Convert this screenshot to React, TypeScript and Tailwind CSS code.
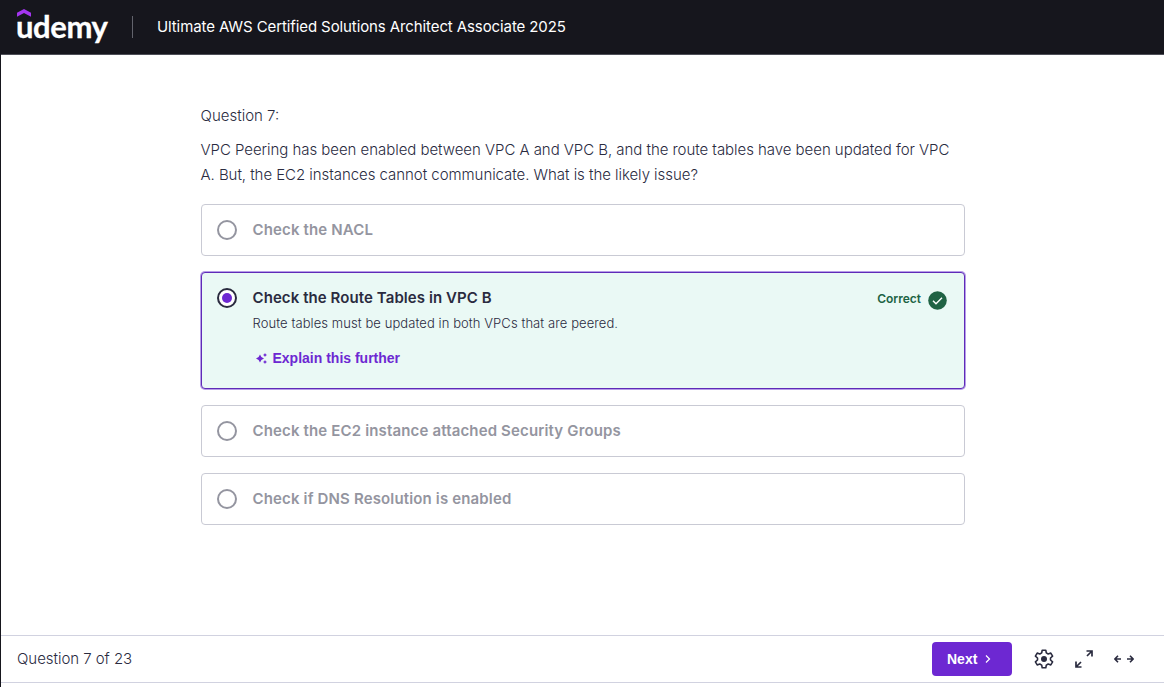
import React from "react";

function Radio({ checked = false }: { checked?: boolean }) {
  return (
    <span
      className={
        checked
          ? "flex size-5 shrink-0 items-center justify-center rounded-full border-2 border-[#2a2b3f] bg-white"
          : "flex size-5 shrink-0 items-center justify-center rounded-full border-2 border-[#9495a0] bg-white"
      }
    >
      {checked && <span className="size-2.5 rounded-full bg-[#6d28d2]" />}
    </span>
  );
}

function Option({ label }: { label: string }) {
  return (
    <div className="flex h-[52px] items-center gap-[15.5px] rounded border border-[#c9cad4] px-[15px]">
      <Radio />
      <span className="text-[15px] leading-6 font-semibold tracking-[0.15px] text-[#9495a0]">{label}</span>
    </div>
  );
}

export default function App() {
  return (
    <div className="flex h-[687px] w-[1164px] flex-col overflow-hidden border-l border-[#16161d] bg-white font-['Inter',sans-serif] text-[#2a2b3f]">
      <header className="flex h-[55px] shrink-0 items-center border-b border-[#4d4e57] bg-[#16161d] pl-[15px]">
        <div className="relative h-full w-[92px] font-['Lato',sans-serif] text-[31px] leading-[53px] font-bold tracking-[-0.4px] text-white [-webkit-text-stroke:0.3px_white]">
          udemy
          <svg className="absolute top-[9px] left-[1px]" width="14" height="8" viewBox="0 0 14 8" fill="#a435f0">
            <path d="M7 0 14 3.700v4L7 4 0 7.700v-4z" />
          </svg>
        </div>
        <span className="ml-6 h-[22px] w-px bg-[#62636c]" />
        <span className="ml-6 text-[15px] tracking-[-0.1px] text-white">Ultimate AWS Certified Solutions Architect Associate 2025</span>
      </header>

      <main className="flex flex-1 flex-col pt-[49px] pl-[200px]">
        <div className="flex w-[764px] flex-col">
          <div className="-ml-[0.5px] text-[15px] leading-6 font-light">Question 7:</div>
          <p className="mt-[9px] -ml-[0.5px] text-[15px] leading-[25px] font-light tracking-[-0.045px]">
            <span className="block whitespace-nowrap">VPC Peering has been enabled between VPC A and VPC B, and the route tables have been updated for VPC</span>
            <span className="block whitespace-nowrap">A. But, the EC2 instances cannot communicate. What is the likely issue?</span>
          </p>
          <div className="mt-[17px] flex flex-col gap-4">
            <Option label="Check the NACL" />
            <div className="flex h-[117px] rounded border border-[#5f2bb8] bg-[#eaf9f5] pl-[15px] shadow-[0_0_0_1px_#b79ee8]">
              <div className="pt-[15px]">
                <Radio checked />
              </div>
              <div className="ml-[15.5px] flex flex-1 flex-col pt-[13px]">
                <span className="text-[15px] leading-6 font-semibold tracking-[0.08px]">Check the Route Tables in VPC B</span>
                <span className="mt-[3px] text-[13px] leading-5 font-light tracking-[0.08px]">Route tables must be updated in both VPCs that are peered.</span>
                <button className="mt-[15px] flex items-center gap-[6px] pl-[3px] text-left font-['Liberation_Sans',sans-serif] text-[14px] leading-5 font-bold text-[#6d28d2]">
                  <svg width="11" height="11" viewBox="0 0 11 11" fill="currentColor">
                    <path d="M4 1.500 5.400 4.100 8 5.500 5.400 6.900 4 9.500 2.600 6.900 0 5.500 2.600 4.100zM9 0l.7 1.300 1.300.7-1.300.7L9 4l-.7-1.300L7 2l1.300-.7zM9 7l.7 1.300L11 9l-1.300.7L9 11l-.7-1.300L7 9l1.300-.7z" />
                  </svg>
                  Explain this further
                </button>
              </div>
              <div className="mt-4 mr-[17px] flex h-5 items-center gap-[7px] text-[12px] font-semibold text-[#206344]">
                <span>Correct</span>
                <svg className="mt-0.5" width="19" height="19" viewBox="0 0 19 19" fill="none">
                  <circle cx="9.5" cy="9.5" r="9.3" fill="#206344" />
                  <path d="m5 9.700 3 3 6-6" stroke="white" strokeWidth="1.4" />
                </svg>
              </div>
            </div>
            <Option label="Check the EC2 instance attached Security Groups" />
            <Option label="Check if DNS Resolution is enabled" />
          </div>
        </div>
      </main>

      <footer className="mb-1 flex h-12 shrink-0 items-center border-y border-[#d1d2e0] pl-4">
        <span className="text-[15px] font-light tracking-[-0.04px]">Question 7 of 23</span>
        <button className="ml-auto flex h-[34px] w-20 items-center rounded bg-[#6d28d2] pl-[15px] font-['Liberation_Sans',sans-serif] text-[14px] font-bold text-white">
          Next
          <svg className="ml-[8px]" width="6" height="8" viewBox="0 0 6 8" fill="none" stroke="white" strokeWidth="1.2">
            <path d="m1 .5 3.500 3.500L1 7.500" />
          </svg>
        </button>
        <svg className="ml-[22px]" width="20" height="20" viewBox="0 0 20 20" fill="none" stroke="#2a2b3f" strokeWidth="1.6" strokeLinejoin="round">
          <path d="M8.200 1.200h3.600l.5 2.700 1.900 1.100 2.600-.9 1.800 3.100-2.100 1.800v2l2.100 1.800-1.800 3.100-2.600-.9-1.900 1.100-.5 2.700H8.200l-.5-2.700L5.800 15l-2.600.9-1.800-3.100L3.500 11V9L1.400 7.200l1.800-3.100 2.600.9 1.900-1.100z" />
          <circle cx="10" cy="10" r="3" fill="#2a2b3f" stroke="none" />
        </svg>
        <svg className="ml-[21px]" width="18" height="18" viewBox="0 0 18 18" fill="none" stroke="#2a2b3f" strokeWidth="1.7">
          <path d="M11.500 1H17v5.500M17 1l-5 5M6.500 17H1v-5.500M1 17l5-5" />
        </svg>
        <svg className="mr-[30px] ml-[21px]" width="20" height="8" viewBox="0 0 20 8" fill="none" stroke="#2a2b3f" strokeWidth="1.6">
          <path d="M4 .8.9 4 4 7.200M1 4h6M16 .8 19.100 4 16 7.200M19 4h-6" />
        </svg>
      </footer>
    </div>
  );
}
